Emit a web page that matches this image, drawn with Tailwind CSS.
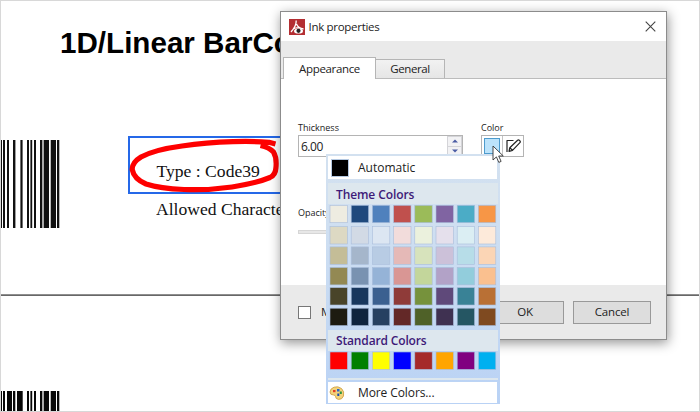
<!DOCTYPE html>
<html lang="en">
<head>
<meta charset="utf-8">
<title>Ink properties</title>
<script src="https://cdn.jsdelivr.net/npm/@tailwindcss/browser@4"></script>
</head>
<body class="relative h-[412px] w-[700px] overflow-hidden bg-white font-['Open_Sans','Noto_Sans',sans-serif] text-[#222]">
<!-- Document page -->
<main class="relative flex h-[412px] w-[700px] flex-col overflow-hidden border border-[#d8d8d8] text-[#111]">
  <h1 class="mt-[22px] ml-[59px] h-[117px] w-[222px] shrink-0 overflow-hidden whitespace-nowrap font-['Liberation_Sans',sans-serif] text-[29.6px] leading-[40px] font-bold text-black">1D/Linear BarCo</h1>
  <section class="flex h-[154px] shrink-0">
    <svg class="-ml-px block h-[88px] w-[128px] shrink-0" viewBox="0 0 128 88">
      <path fill="#111" d="M0 0h2v88H0zM3 0h2v88H3zM7 0h2v88H7zM13 0h2.400v88H13zM20.400 0h2.200v88h-2.200zM27 0h2v88h-2zM30.400 0h1.800v88h-1.800zM34 0h2v88h-2zM40 0h2v88h-2zM44 0h5v88h-5zM50.700 0h5.300v88h-5.300zM57 0h2.300v88H57z"/>
      <path fill="#aaa" d="M42 0h2v88h-2z"/>
    </svg>
    <div class="-mt-[4px] flex flex-col">
      <div class="flex h-[58px] w-[154px] items-center border-2 border-[#2568e8] pt-[12px] pl-[26.5px] font-['Liberation_Serif',serif] text-[17.6px] whitespace-nowrap">Type : Code39</div>
      <div class="mt-[3px] ml-[28px] w-[126px] overflow-hidden font-['Liberation_Serif',serif] text-[17.6px] leading-[24px] whitespace-nowrap">Allowed Characte</div>
    </div>
  </section>
  <div class="h-[2px] shrink-0 border-t border-[#8f8f8f] bg-[#686868]"></div>
  <svg class="mt-[95px] -ml-px block h-[20px] w-[60px] shrink-0" viewBox="0 0 60 20">
    <path fill="#080808" d="M0 0h2v20H0zM3 0h2v20H3zM7 0h5v20H7zM13 0h2.300v20H13zM17 0h5.700v20H17zM27 0h2v20h-2zM30.400 0h1.800v20h-1.800zM34 0h2v20h-2zM40 0h2v20h-2zM44 0h5v20h-5zM50.700 0h5.300v20h-5.300zM57 0h2.300v20H57z"/>
    <path fill="#aaa" d="M42 0h2v20h-2z"/>
  </svg>
</main>
<!-- Ink annotation -->
<svg class="absolute top-[130px] left-[120px]" width="165" height="70" viewBox="120 130 165 70" fill="none" stroke="#fe0000" stroke-width="5.200" stroke-linejoin="round">
  <path d="M275.500 144L269 142.300Q251 141 233 141.700Q206 142.500 182 146Q155 149.500 141 157Q132 162.500 132.200 169.500Q134 179 146 184Q160 188.500 184 189.500Q207 190.500 232 187Q257 183 270 177.500Q275.500 175 275.900 168Q277 158 273.500 152Q269.500 147.500 260.500 145.500"/>
</svg>

<!-- Dialog -->
<div class="absolute top-[11px] left-[280px] flex h-[329px] w-[387px] flex-col border border-[#8c8c8c] bg-white text-[12px] shadow-[1px_3px_11px_rgba(0,0,0,0.42)]">
  <header class="flex h-[29px] shrink-0 items-center pr-[10px] pl-[8px]">
    <svg class="size-[16px] shrink-0" viewBox="0 0 16 16">
      <path fill="#b32e32" d="M0 0h16v16H0z"/>
      <path d="M7.200 1.500Q7.500 7 2 13M7.500 5Q9 9 14.500 10M4 10Q8 7.700 12 9" fill="none" stroke="#fff" stroke-width="1.300"/>
      <ellipse cx="9.500" cy="12" rx="4.500" ry="2.600" fill="#fff"/><circle cx="9.500" cy="11.800" r="2.100" fill="#222"/>
    </svg>
    <span class="ml-[3.500px] text-[11.5px] tracking-[-0.3px]">Ink properties</span>
    <svg class="ml-auto size-[11px]" viewBox="0 0 11 11"><path d="M.7.700l9.600 9.600M10.300.700L.7 10.300" stroke="#444" stroke-width="1.100"/></svg>
  </header>
  <nav class="flex h-[38px] shrink-0 items-end border-b border-[#bcbcbc] bg-[#eaeaea] pl-[2px]">
    <div class="-mb-px flex h-[22px] w-[93px] items-center justify-center border border-b-0 border-[#b5b5b5] bg-white pt-[1px] text-[11.5px] tracking-[-0.35px]">Appearance</div>
    <div class="flex h-[19px] w-[69px] items-center justify-center border border-b-0 border-l-0 border-[#b5b5b5] bg-linear-to-b from-[#f2f2f2] to-[#e6e6e6] text-[11.5px] tracking-[-0.4px]">General</div>
  </nav>
  <div class="h-[206px] shrink-0 px-[17px] pt-[42px]">
    <div class="flex">
      <div class="w-[183px]">
        <div class="h-[14px] text-[9px] leading-[14px]">Thickness</div>
        <div class="flex h-[22px] w-[165px] border border-[#b4b4b4]">
          <span class="grow pl-[2px] text-[12px] leading-[22px] tracking-[-0.5px]">6.00</span>
          <div class="flex w-[15px] flex-col gap-[1px] bg-[#d4d4d8] p-px">
            <div class="flex flex-1 items-center justify-center bg-[#f2f2f4]"><svg width="6" height="4"><path d="M3 .5L6 3.500H0z" fill="#4b5ca4"/></svg></div>
            <div class="flex flex-1 items-center justify-center bg-[#f2f2f4]"><svg width="6" height="4"><path d="M0 .5h6L3 3.500z" fill="#4b5ca4"/></svg></div>
          </div>
        </div>
      </div>
      <div>
        <div class="h-[14px] text-[9px] leading-[14px]">Color</div>
        <div class="flex h-[22px] w-[43px] border border-[#b4b4b4]">
          <div class="w-[21px] border-r border-[#c4c4c4] p-[2px]"><div class="h-[16px] w-[16px] border border-[#4d9bcd] bg-[#bce3fb]"></div></div>
          <svg class="mt-[2px] ml-[2px]" width="17" height="17" viewBox="0 0 17 17" fill="none" stroke="#222" stroke-width="1.200" stroke-linejoin="round"><path d="M8.500 2.500H2v11.500M4 13.300l.8-3.600 7.800-7.500q1-.8 2.100.4t.2 2.100L7.500 12.300zM4.800 9.700l2.700 2.600"/></svg>
        </div>
      </div>
    </div>
    <div class="mt-[49px] h-[14px] text-[9px] leading-[14px]">Opacity</div>
    <div class="mt-[10px] h-[4px] w-[165px] border border-[#d6d6d6] bg-[#e7e7e7]"></div>
  </div>
  <footer class="flex grow items-center bg-[#eaeaea] pr-[15px] pl-[17px]">
    <span class="mr-[10px] size-[13px] border border-[#777] bg-white"></span>
    <span class="text-[11.5px]">Make default</span>
    <div class="ml-auto flex gap-[9px] text-[11.5px] tracking-[-0.2px]">
      <div class="flex h-[23px] w-[78px] items-center justify-center border border-[#999] bg-[#dddddd]">OK</div>
      <div class="flex h-[23px] w-[78px] items-center justify-center border border-[#999] bg-[#dddddd]">Cancel</div>
    </div>
  </footer>
</div>

<!-- Colour picker menu -->
<div class="absolute top-[154px] left-[326px] flex h-[250px] w-[174px] flex-col bg-linear-to-b from-[#d3e1f0] via-[#cfdff1] via-30% to-[#b9d2f5] px-[2px]">
  <div class="mt-[2px] flex h-[23px] w-[169px] items-center bg-white"><span class="ml-[3px] size-[18px] border border-[#b5c9e2] bg-black"></span><span class="mt-px ml-[9px] text-[12px]">Automatic</span></div>
  <div class="mt-[4px] flex h-[21px] items-center bg-[#dde7ee] pt-[2px] pl-[8px] text-[12px] font-semibold tracking-[-0.1px] text-[#3e1a78]">Theme Colors</div>
  <svg class="mt-[1px] block h-[126px] shrink-0" width="170" viewBox="328 205 170 126" id="theme"></svg>
  <div class="-mt-px flex h-[21px] items-center bg-[#dde7ee] pt-[1px] pl-[8px] text-[12px] font-semibold tracking-[-0.15px] text-[#3e1a78]">Standard Colors</div>
  <svg class="block h-[27px] shrink-0" width="170" viewBox="328 351 170 27" id="standard"></svg>
  <div class="h-[2px] bg-[#dde7ee]"></div>
  <div class="mt-[2px] flex h-[21px] w-[169px] items-center bg-white">
    <svg class="ml-[1px] shrink-0" width="16" height="16" viewBox="0 0 16 16"><path d="M5 2.200Q9 .8 12.500 3.500q3.200 3 2 7.500-1.300 3.700-5 3.400Q6.500 14 6.500 11.500 6.300 10 4.500 10 1 10 1 7 1.200 3.500 5 2.200z" fill="#f3d27b" stroke="#c99a3b" stroke-width=".8"/><path d="M4 5h2.500v2.200H4z" fill="#e33b25"/><path d="M8 4h2.500v2.500H8z" fill="#2865c9"/><path d="M10.800 6.500h2V9h-2z" fill="#299343"/><path d="M8.300 8.500h2V11h-2z" fill="#194cb0"/></svg>
    <span class="ml-[13px] text-[12px] tracking-[-0.1px]">More Colors...</span>
  </div>
</div>
<script>
  const rows = [
    [205, ["#eeece1","#1f497d","#4f81bd","#c0504d","#9bbb59","#8064a2","#4bacc6","#f79646"]],
    [226.3, ["#ddd9c3","#d2dae5","#dce6f2","#f2dcdb","#ebf1dd","#e5e0ec","#dbeef3","#fdeada"]],
    [246.6, ["#c4bd97","#a5b6cb","#b8cce4","#e5b9b7","#d7e3bc","#ccc1d9","#b7dde8","#fbd5b5"]],
    [267.2, ["#938953","#7992b1","#95b3d7","#d99694","#c3d69b","#b2a2c7","#92cddc","#fac08f"]],
    [287.3, ["#494429","#17365d","#3b6090","#8f3b39","#76923c","#5f497a","#398296","#b97035"]],
    [307.9, ["#1d1b10","#0f243e","#264061","#632827","#4f6128","#3f3151","#255663","#7f4a20"]]
  ];
  const swatches = (y, colors) => colors.map((c, i) =>
    `<rect x="${(330 + i * 21.2).toFixed(1)}" y="${y}" width="17.4" height="17.4" fill="${c}" stroke="#a9bddb" stroke-width=".6"/>`).join("");
  document.getElementById("theme").innerHTML = rows.map(([y, c]) => swatches(y + .3, c)).join("");
  document.getElementById("standard").innerHTML =
    swatches(352, ["#ff0000","#008000","#ffff00","#0000ff","#a52a2a","#ffa500","#800080","#00b0f0"]);
</script>
<!-- Pointer -->
<svg class="absolute top-[145px] left-[492px]" width="14" height="19" viewBox="0 0 14 19"><path d="M1 1v14l3.400-3.100 2.400 5.500 2.300-1-2.400-5.400h4.600z" fill="#fff" stroke="#333" stroke-width=".9"/></svg>
</body>
</html>
